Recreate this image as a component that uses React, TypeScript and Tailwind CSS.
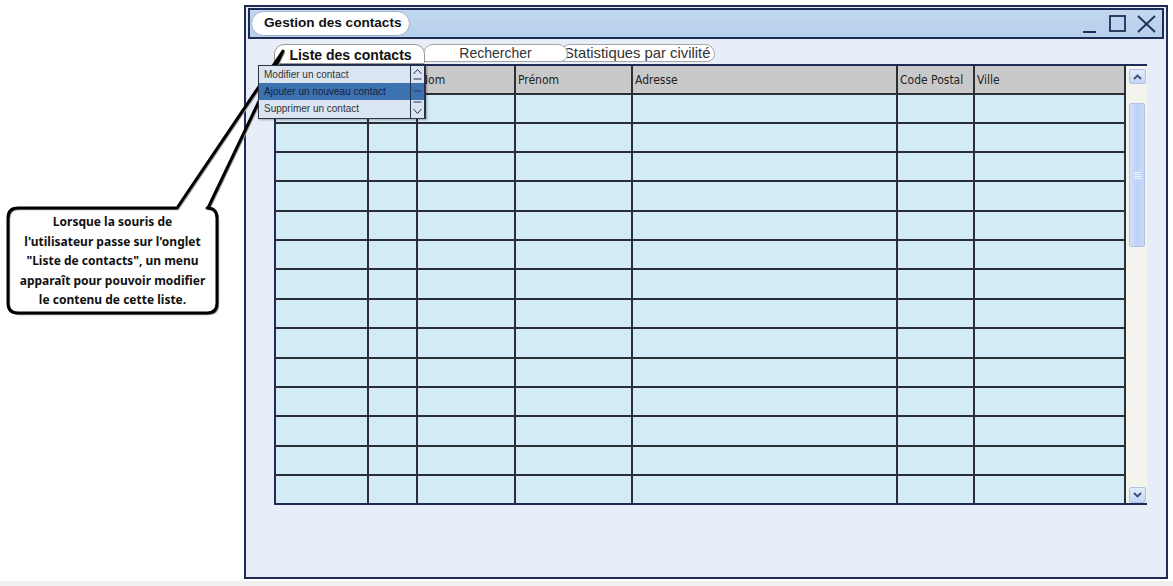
import React from "react";

const colClasses = [
  "w-[93px]",
  "w-[49px]",
  "w-[98px]",
  "w-[117px]",
  "w-[265px]",
  "w-[77px]",
  "w-[151px]",
];
const headers = ["", "", "Nom", "Prénom", "Adresse", "Code Postal", "Ville"];
const rowHeights = [
  "h-[29px]",
  "h-[29px]",
  "h-[29px]",
  "h-[30px]",
  "h-[29px]",
  "h-[29px]",
  "h-[30px]",
  "h-[29px]",
  "h-[30px]",
  "h-[29px]",
  "h-[29px]",
  "h-[30px]",
  "h-[29px]",
  "h-[27px]",
];

function TitleControls() {
  return (
    <div className="ml-auto mr-[6px] flex items-center">
      <svg width="13" height="18" viewBox="0 0 13 18">
        <line x1="0" y1="17" x2="13" y2="17" stroke="#1e2d5a" strokeWidth="2" />
      </svg>
      <svg className="ml-[13px]" width="17" height="17" viewBox="0 0 17 17">
        <rect x="1" y="1" width="15" height="15" fill="none" stroke="#1e2d5a" strokeWidth="1.8" />
      </svg>
      <svg className="ml-[11px]" width="19" height="18" viewBox="0 0 19 18">
        <line x1="1" y1="1" x2="18" y2="17" stroke="#1e2d5a" strokeWidth="1.8" />
        <line x1="18" y1="1" x2="1" y2="17" stroke="#1e2d5a" strokeWidth="1.8" />
      </svg>
    </div>
  );
}

function Scrollbar() {
  return (
    <div className="w-[21px] bg-[#f4f4ef] flex flex-col items-center pt-[3px] pl-[1px]">
      <div className="w-[17px] h-[15px] rounded-[2px] border border-[#aec2e6] bg-gradient-to-b from-[#e3ecfb] to-[#c4d6f6] flex items-center justify-center">
        <svg width="9" height="6" viewBox="0 0 9 6">
          <path d="M1 5 L4.5 1.5 L8 5" fill="none" stroke="#3a4d7a" strokeWidth="1.8" />
        </svg>
      </div>
      <div className="mt-[19px] w-[16px] h-[144px] rounded-[2px] border border-[#b0c4ea] bg-gradient-to-r from-[#d4e2fa] via-[#bcd1f7] to-[#c8daf9] flex flex-col items-center justify-center gap-[1px]">
        <div className="w-[7px] h-[1px] bg-[#eef3fd]" />
        <div className="w-[7px] h-[1px] bg-[#eef3fd]" />
        <div className="w-[7px] h-[1px] bg-[#eef3fd]" />
        <div className="w-[7px] h-[1px] bg-[#eef3fd]" />
      </div>
      <div className="mt-auto w-[17px] h-[16px] rounded-[2px] border border-[#aec2e6] bg-gradient-to-b from-[#e3ecfb] to-[#c4d6f6] flex items-center justify-center">
        <svg width="9" height="6" viewBox="0 0 9 6">
          <path d="M1 1 L4.5 4.5 L8 1" fill="none" stroke="#3a4d7a" strokeWidth="1.8" />
        </svg>
      </div>
    </div>
  );
}

function Grid() {
  return (
    <div className="flex w-[873px] border-t-2 border-b-2 border-l-2 border-[#1e2b55]">
      <div className="flex flex-col w-[850px]">
        <div className="flex h-[29px] bg-[#c9c9c9]">
          {headers.map((h, i) => (
            <div
              key={i}
              className={`${colClasses[i]} h-full border-r-2 border-b-2 border-[#2a2f36] pl-[2px] pt-[7px] text-[12px] leading-[14px] text-[#222] font-['DejaVu_Sans_Condensed','Liberation_Sans',sans-serif]`}
            >
              {h}
            </div>
          ))}
        </div>
        {rowHeights.map((rh, r) => (
          <div key={r} className={`flex ${rh} bg-[#d3eaf7]`}>
            {colClasses.map((c, i) => (
              <div
                key={i}
                className={`${c} h-full border-r-2 border-[#2a2f36] ${
                  r < rowHeights.length - 1 ? "border-b-2" : ""
                }`}
              />
            ))}
          </div>
        ))}
      </div>
      <Scrollbar />
    </div>
  );
}

function Tabs() {
  return (
    <div className="flex h-[20px] items-start">
      <div className="relative z-30 w-[151px] h-[20px] rounded-t-[10px] rounded-b-[2px] border border-[#9a9a9a] bg-white flex items-center justify-center pl-[2px] text-[14px] font-bold text-[#111] font-['Liberation_Sans',sans-serif] leading-none pt-[1px]">
        Liste des contacts
      </div>
      <div className="relative z-20 -ml-[2px] w-[145px] h-[18px] rounded-t-[10px] rounded-br-[8px] border border-[#a6a6a6] bg-white flex items-center justify-center text-[14px] text-[#333] font-['Liberation_Sans',sans-serif] leading-none">
        Rechercher
      </div>
      <div className="relative z-10 -ml-[8px] w-[155px] h-[18px] rounded-t-[10px] rounded-br-[8px] border border-[#a6a6a6] bg-white flex items-center pl-[3px] text-[14.8px] text-[#333] font-['Liberation_Sans',sans-serif] leading-none whitespace-nowrap overflow-hidden">
        Statistiques par civilité
      </div>
    </div>
  );
}

function Menu() {
  const items = ["Modifier un contact", "Ajouter un nouveau contact", "Supprimer un contact"];
  return (
    <div className="absolute left-[258px] top-[65px] z-40 w-[168px] h-[54px] border border-[#2d3646] bg-[#dbe5f1] shadow-[1px_1px_2px_rgba(0,0,0,0.3)] font-['Liberation_Sans',sans-serif]">
      {items.map((t, i) => (
        <div
          key={i}
          className={`h-[17px] flex items-center pl-[5px] text-[10px] ${
            i === 1 ? "bg-[#3d72b0] text-[#14213a]" : "text-[#333]"
          }`}
        >
          {t}
        </div>
      ))}
      <div className="absolute right-0 top-0 bottom-0 w-[15px] border-l border-r border-[#233048]">
        <svg width="13" height="52" viewBox="0 0 13 52">
          <path d="M2.5 8 L6.5 3.5 L10.5 8" fill="none" stroke="#2a3550" strokeWidth="1" />
          <line x1="2.5" y1="13" x2="10.5" y2="13" stroke="#2a3550" strokeWidth="1" />
          <line x1="2.5" y1="25" x2="10.5" y2="25" stroke="#2a3550" strokeWidth="1" />
          <line x1="2.5" y1="36" x2="10.5" y2="36" stroke="#2a3550" strokeWidth="1" />
          <path d="M2.5 43 L6.5 47.5 L10.5 43" fill="none" stroke="#2a3550" strokeWidth="1" />
        </svg>
      </div>
    </div>
  );
}

function Callout() {
  const d =
    "M18 208 L177 208 L283 51 L208 208 L207 208 Q217 208 217 218 L217 303 Q217 313 207 313 L18 313 Q8 313 8 303 L8 218 Q8 208 18 208 Z";
  return (
    <>
      <svg className="absolute left-0 top-0 z-30 pointer-events-none" width="1173" height="586" viewBox="0 0 1173 586">
        <path d={d} transform="translate(1.2 1.2)" fill="none" stroke="#9a9a9a" strokeWidth="2" strokeLinejoin="round" />
        <path d={d} fill="none" stroke="#000" strokeWidth="3" strokeLinejoin="round" />
      </svg>
      <div className="absolute left-[10px] top-[212px] z-30 w-[205px] text-center text-[12px] leading-[19.5px] font-bold text-[#111] font-['Noto_Sans','Open_Sans',sans-serif]">
        Lorsque la souris de
        <br />
        l'utilisateur passe sur l'onglet
        <br />
        "Liste de contacts", un menu
        <br />
        apparaît pour pouvoir modifier
        <br />
        le contenu de cette liste.
      </div>
    </>
  );
}

export default function App() {
  return (
    <div className="relative w-[1173px] h-[586px] overflow-hidden bg-white flex flex-col font-['Liberation_Sans',sans-serif]">
      <div className="ml-[244px] mt-[5px] w-[924px] h-[574px] border-2 border-[#1e2b55] bg-[#e7eef8] flex flex-col">
        <div className="mx-[2px] mt-[1px] h-[31px] border-2 border-[#1e2b55] bg-gradient-to-b from-[#c2d8f0] to-[#b5cfeb] flex items-center">
          <div className="ml-[1px] h-[25px] pl-[12px] pr-[8px] rounded-full border border-[#9fb3cc] bg-white flex items-center text-[13.6px] font-bold text-[#111]">
            Gestion des contacts
          </div>
          <TitleControls />
        </div>
        <div className="pl-[28px] pt-[5px]">
          <Tabs />
          <Grid />
        </div>
      </div>
      <div className="mt-auto h-[5px] bg-[#f0f0f0]" />
      <Callout />
      <Menu />
    </div>
  );
}
